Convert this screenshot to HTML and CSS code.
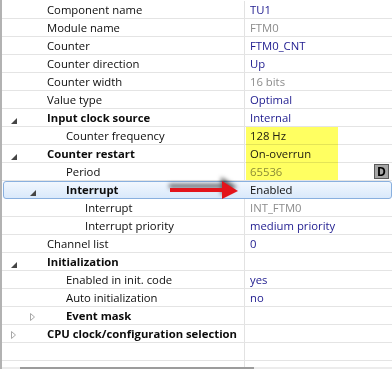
FILE: index.html
```html
<!DOCTYPE html>
<html lang="en">
<head>
    <meta charset="UTF-8">
    <title>Component Inspector</title>
    <link rel="stylesheet" href="styles.css">
</head>
<body>
<div class="inspector">
    <div class="row"><div class="name"><span class="twisty"></span>Component name</div><div class="value">TU1</div></div>
    <div class="row"><div class="name"><span class="twisty"></span>Module name</div><div class="value ro">FTM0</div></div>
    <div class="row"><div class="name"><span class="twisty"></span>Counter</div><div class="value">FTM0_CNT</div></div>
    <div class="row"><div class="name"><span class="twisty"></span>Counter direction</div><div class="value">Up</div></div>
    <div class="row"><div class="name"><span class="twisty"></span>Counter width</div><div class="value ro">16 bits</div></div>
    <div class="row"><div class="name"><span class="twisty"></span>Value type</div><div class="value">Optimal</div></div>
    <div class="row group"><div class="name"><span class="twisty"><svg class="open" width="6" height="6" viewBox="0 0 6 6"><polygon points="6,0 6,6 0,6"/></svg></span>Input clock source</div><div class="value">Internal</div></div>
    <div class="row"><div class="name"><span class="indent1"></span><span class="twisty"></span>Counter frequency</div><div class="value marked">128 Hz</div></div>
    <div class="row group"><div class="name"><span class="twisty"><svg class="open" width="6" height="6" viewBox="0 0 6 6"><polygon points="6,0 6,6 0,6"/></svg></span>Counter restart</div><div class="value marked">On-overrun</div></div>
    <div class="row"><div class="name"><span class="indent1"></span><span class="twisty"></span>Period</div><div class="value ro">65536<span class="dbtn">D</span></div></div>
    <div class="row group selected"><div class="name"><span class="indent1"></span><span class="twisty"><svg class="open" width="6" height="6" viewBox="0 0 6 6"><polygon points="6,0 6,6 0,6"/></svg></span>Interrupt</div><div class="value plain">Enabled</div></div>
    <div class="row"><div class="name"><span class="indent2"></span><span class="twisty"></span>Interrupt</div><div class="value ro">INT_FTM0</div></div>
    <div class="row"><div class="name"><span class="indent2"></span><span class="twisty"></span>Interrupt priority</div><div class="value">medium priority</div></div>
    <div class="row"><div class="name"><span class="twisty"></span>Channel list</div><div class="value">0</div></div>
    <div class="row group"><div class="name"><span class="twisty"><svg class="open" width="6" height="6" viewBox="0 0 6 6"><polygon points="6,0 6,6 0,6"/></svg></span>Initialization</div><div class="value"></div></div>
    <div class="row"><div class="name"><span class="indent1"></span><span class="twisty"></span>Enabled in init. code</div><div class="value">yes</div></div>
    <div class="row"><div class="name"><span class="indent1"></span><span class="twisty"></span>Auto initialization</div><div class="value">no</div></div>
    <div class="row group"><div class="name"><span class="indent1"></span><span class="twisty"><svg class="closed" width="5" height="8" viewBox="0 0 5 8"><polygon points="0.5,0.5 4.5,4 0.5,7.5"/></svg></span>Event mask</div><div class="value"></div></div>
    <div class="row group"><div class="name"><span class="twisty"><svg class="closed" width="5" height="8" viewBox="0 0 5 8"><polygon points="0.5,0.5 4.5,4 0.5,7.5"/></svg></span>CPU clock/configuration selection</div><div class="value"></div></div>
    <div class="row"><div class="name"></div><div class="value"></div></div>
    <div class="filler"><div class="name"></div><div class="value"></div></div>
    <div class="scrollbar"><div class="thumb"></div></div>

    <!-- annotations drawn over the screenshot -->
    <div class="highlighter"></div>
    <svg class="arrow" width="84" height="28" viewBox="0 0 84 28">
        <rect x="10" y="12" width="54" height="4" fill="#e3141b"/>
        <polygon points="62,5 78,15 62,23" fill="#e3141b"/>
    </svg>
</div>
</body>
</html>
```

FILE: styles.css
```css
body {
    margin: 0;
    padding: 0;
    background: #fff;
    font-family: "Open Sans", "Noto Sans", sans-serif;
    font-size: 11.3px;
}

.inspector {
    position: relative;
    width: 392px;
    height: 369px;
    padding-top: 1px;
    box-sizing: border-box;
    border-left: 2px solid #b2b2b2;
    overflow: hidden;
}

.row {
    display: grid;
    grid-template-columns: 243px 1fr;
    height: 18px;
    box-sizing: border-box;
    border-bottom: 1px solid #e4e4e4;
    line-height: 17px;
    color: #0c0c0c;
}

.name {
    display: flex;
    align-items: flex-start;
    border-right: 1px solid #e2e2e2;
    white-space: nowrap;
    overflow: hidden;
}

.group .name {
    font-weight: bold;
}

.indent1 {
    flex: none;
    width: 19px;
}

.indent2 {
    flex: none;
    width: 38px;
}

.twisty {
    flex: none;
    width: 45px;
    height: 17px;
    padding-left: 9px;
    box-sizing: border-box;
}

.twisty .open {
    display: block;
    margin-top: 9px;
    fill: #454545;
}

.twisty .closed {
    display: block;
    margin-top: 6px;
    fill: none;
    stroke: #a8a8a8;
    stroke-width: 1;
}

.value {
    display: flex;
    padding-left: 5px;
    color: #1d1a8e;
    white-space: nowrap;
}

.value.ro {
    color: #8c8c8c;
}

.value.plain {
    color: #0c0c0c;
}

.value.marked {
    color: #22202a;
}

.dbtn {
    margin-left: auto;
    margin-right: 3px;
    margin-top: 1px;
    width: 15px;
    height: 15px;
    box-sizing: border-box;
    border: 1px solid #5a5a5a;
    background: #a6a6a6;
    color: #000;
    font-weight: bold;
    font-size: 12px;
    line-height: 13px;
    text-align: center;
}

.selected {
    margin-left: 1px;
    border: 1px solid #89b0df;
    border-radius: 3px;
    background: linear-gradient(#f1f7fe, #d9e9fb);
    line-height: 16px;
    grid-template-columns: 241px 1fr;
}

.selected .name {
    border-right: none;
}

.selected .twisty {
    width: 43px;
    height: 16px;
    padding-left: 7px;
}

.selected .twisty .open {
    margin-top: 8px;
}

.filler {
    display: grid;
    grid-template-columns: 243px 1fr;
    height: 6px;
}

.filler .name {
    border-right: 1px solid #e2e2e2;
}

.scrollbar {
    height: 2px;
    background: #ececec;
}

.scrollbar .thumb {
    margin-left: 18px;
    width: 234px;
    height: 2px;
    background: #9c9c9c;
}

.highlighter {
    position: absolute;
    left: 244px;
    top: 127px;
    width: 92px;
    height: 53px;
    background: rgba(255, 255, 0, 0.62);
    mix-blend-mode: multiply;
}

.arrow {
    position: absolute;
    left: 158px;
    top: 176px;
    filter: drop-shadow(-1px -4px 2px rgba(0, 0, 0, 0.6));
}
```
